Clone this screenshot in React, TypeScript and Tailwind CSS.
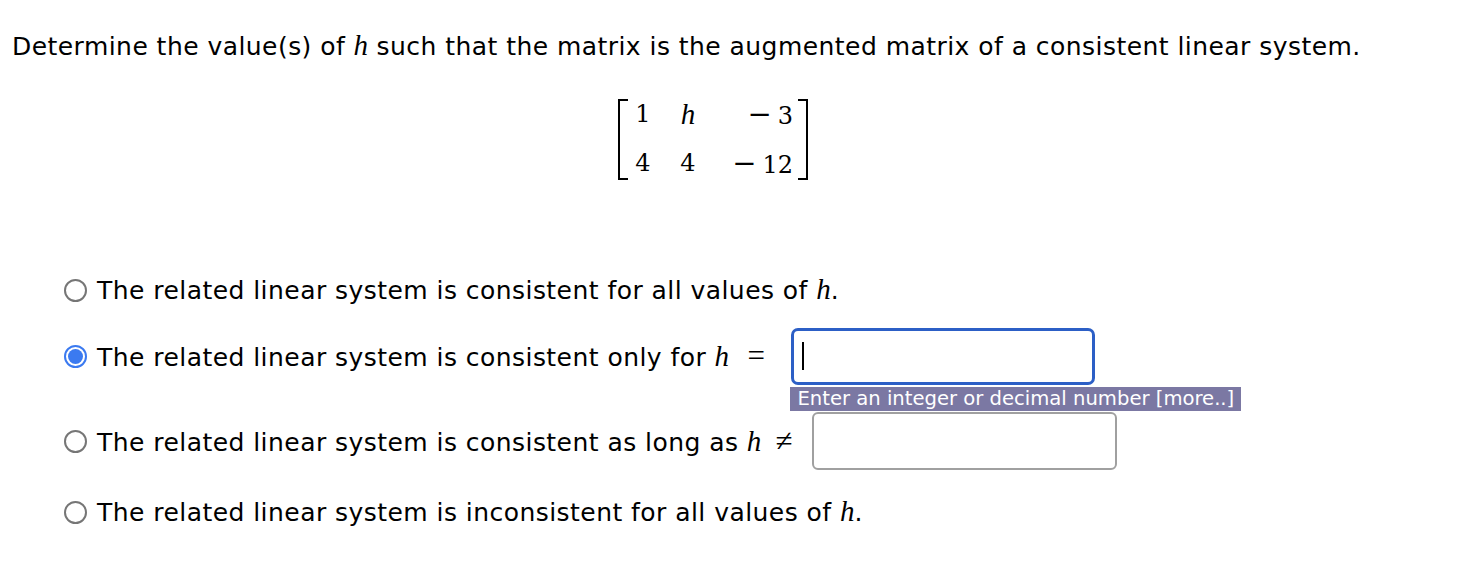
const H = () => <span className="font-['Liberation_Serif',serif] italic text-[29px] tracking-normal">h</span>;

const Minus = () => <span className="font-['DejaVu_Sans',sans-serif] text-[29px] mr-[6px]">−</span>;

function Radio({ checked }: { checked?: boolean }) {
  return checked ? (
    <span className="w-[23px] h-[23px] rounded-full border-[2px] border-[#3b7af0] flex items-center justify-center shrink-0">
      <span className="w-[15px] h-[15px] rounded-full bg-[#3b7af0]" />
    </span>
  ) : (
    <span className="w-[23px] h-[23px] rounded-full border-[2px] border-[#767676] bg-white shrink-0" />
  );
}

export default function App() {
  return (
    <main className="w-[1466px] h-[568px] bg-white text-black font-['DejaVu_Sans',sans-serif] text-[25px] tracking-[0.45px] relative">
      <p className="pl-[12px] pt-[28px] leading-[34px] whitespace-nowrap">
        Determine the value(s) of <H /> such that the matrix is the augmented matrix of a consistent linear system.
      </p>

      <div className="flex mt-[35px] pl-[618px]">
        <div className="flex items-stretch font-['DejaVu_Serif',serif] text-[24px] tracking-normal">
          <span className="w-[10px] h-[81px] border-l-[2px] border-y-[2px] border-black" />
          <div className="grid grid-cols-[20px_20px_70px] gap-x-[25px] px-[5px] leading-[47px] content-center h-[81px]">
            <span className="text-center">1</span>
            <span className="text-center italic font-['Liberation_Serif',serif] text-[29px]">h</span>
            <span className="text-right"><Minus />3</span>
            <span className="text-center">4</span>
            <span className="text-center">4</span>
            <span className="text-right"><Minus />12</span>
          </div>
          <span className="w-[10px] h-[81px] border-r-[2px] border-y-[2px] border-black" />
        </div>
      </div>

      <div className="pl-[64px] mt-[90px] flex flex-col">
        <label className="flex items-center gap-[10px] h-[40px]">
          <Radio />
          <span>The related linear system is consistent for all values of <H />.</span>
        </label>

        <label className="flex items-center gap-[10px] h-[58px] mt-[17px]">
          <Radio checked />
          <span>The related linear system is consistent only for <H /> <span className="font-['Liberation_Serif',serif] text-[31px] ml-[10px]">=</span></span>
          <span className="ml-[16px] w-[304px] h-[57px] rounded-[7px] border-[3px] border-[#2c5fc6] flex items-center pl-[8px] relative">
            <span className="w-[2px] h-[28px] bg-black" />
            <span className="absolute left-[-4px] top-[56px] whitespace-nowrap bg-[#7b78a3] text-white text-[19.6px] tracking-normal leading-[24px] px-[7px]">
              Enter an integer or decimal number [more..]
            </span>
          </span>
        </label>

        <label className="flex items-center gap-[10px] h-[58px] mt-[27px]">
          <Radio />
          <span>The related linear system is consistent as long as <H /> <span className="font-['Liberation_Serif',serif] text-[31px] ml-[6px]">≠</span></span>
          <span className="ml-[9px] w-[305px] h-[58px] rounded-[6px] border-[2px] border-[#a0a0a0]" />
        </label>

        <label className="flex items-center gap-[10px] h-[40px] mt-[22px]">
          <Radio />
          <span>The related linear system is inconsistent for all values of <H />.</span>
        </label>
      </div>
    </main>
  );
}
